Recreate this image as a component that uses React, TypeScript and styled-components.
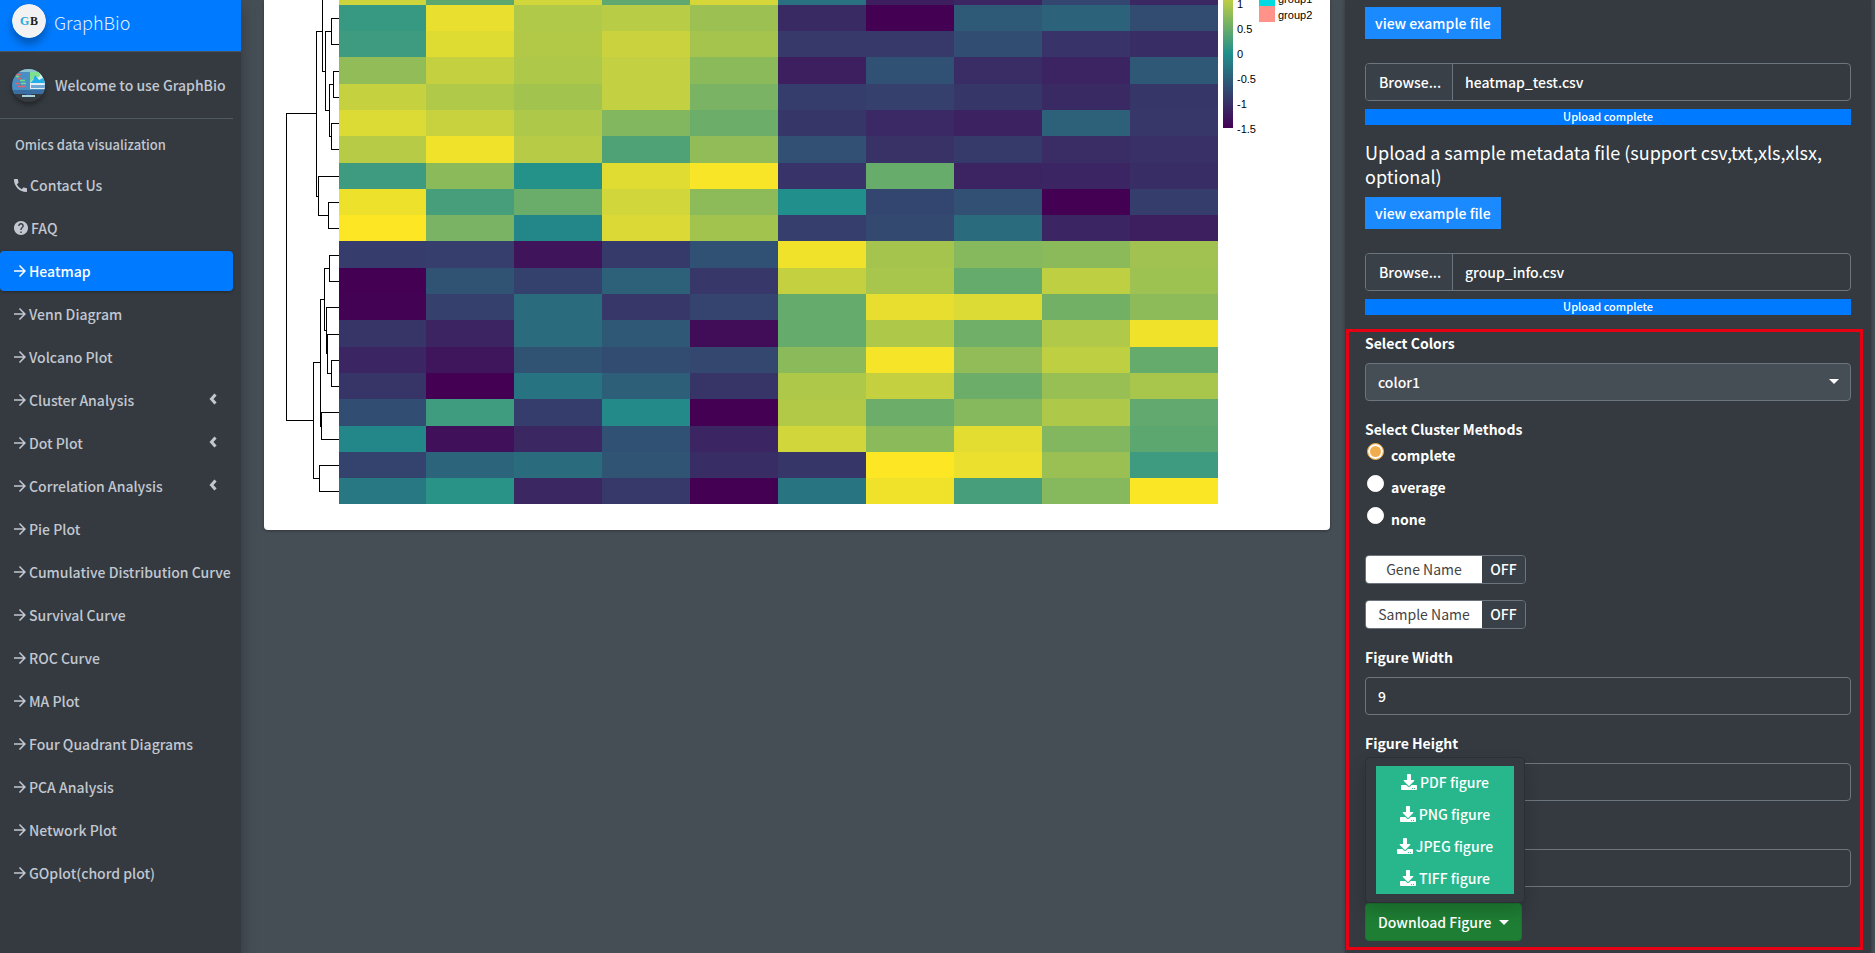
import React from "react";
import styled, { createGlobalStyle, css } from "styled-components";
import { FaDownload } from "react-icons/fa";

const GlobalStyle = createGlobalStyle`
  *, *::before, *::after { box-sizing: border-box; }
  body {
    margin: 0;
    background: #454d55;
    color: #fff;
    font-family: "Noto Sans CJK SC", "Source Sans Pro", "Open Sans", sans-serif;
    font-size: 14px;
    font-weight: 500;
    line-height: 24px;
  }
  input, select, button { font: inherit; color: inherit; }
`;

/* ---------- page frame ---------- */

const Page = styled.div`
  display: flex;
  min-height: 100vh;
`;

const Main = styled.main`
  flex: 1;
  min-width: 0;
  display: grid;
  grid-template-columns: minmax(0, 1fr) 526px;
  column-gap: 15px;
  padding: 0 4px 0 23px;
`;

/* ---------- sidebar ---------- */

const Sidebar = styled.aside`
  width: 241px;
  flex: none;
  background: #343a40;
  color: #c2c7d0;
  box-shadow: 0 8px 14px rgba(0, 0, 0, 0.25);
`;

const Brand = styled.a`
  display: flex;
  align-items: center;
  height: 52px;
  padding: 0 12px 9px;
  gap: 8px;
  background: #007bff;
  border-bottom: 1px solid #4b545c;
  color: rgba(255, 255, 255, 0.9);
  font-size: 18px;
  font-weight: 300;
  text-decoration: none;
`;

const BrandMark = styled.svg`
  width: 34px;
  height: 34px;
  border-radius: 50%;
  box-shadow: 0 6px 8px rgba(0, 0, 0, 0.3);
`;

const BrandName = styled.span`
  padding-top: 2px;
`;

const UserPanel = styled.div`
  display: flex;
  align-items: center;
  gap: 10px;
  margin-right: 8px;
  padding: 14px 0 14px 12px;
  height: 67px;
  border-bottom: 1px solid #4f5962;
  white-space: nowrap;
`;

const Avatar = styled.svg`
  width: 33px;
  height: 33px;
  border-radius: 50%;
  box-shadow: 0 3px 5px rgba(0, 0, 0, 0.35);
`;

const NavHeader = styled.h2`
  margin: 0;
  padding: 14px 15px 8px;
  font-size: 13px;
  line-height: 24px;
  font-weight: 500;
`;

const NavList = styled.ul`
  list-style: none;
  margin: 0;
  padding: 0;
  display: flex;
  flex-direction: column;
  gap: 3px;
`;

const NavLink = styled.a<{ $active?: boolean }>`
  display: flex;
  align-items: center;
  gap: 3px;
  height: 40px;
  margin-right: 8px;
  padding: 0 16px 0 14px;
  border-radius: 4px;
  color: #c2c7d0;
  text-decoration: none;
  white-space: nowrap;
  ${(p) =>
    p.$active &&
    css`
      background: #007bff;
      color: #fff;
      box-shadow: 0 1px 3px rgba(0, 0, 0, 0.3);
    `}
`;

const NavText = styled.span`
  flex: 1;
`;

const NavIcon = styled.svg`
  flex: none;
  fill: currentColor;
`;

const TreeArrow = styled.svg`
  flex: none;
  width: 8px;
  height: 12px;
  margin-bottom: 2px;
  fill: none;
  stroke: currentColor;
  stroke-width: 3;
`;

type IconKind = "call" | "help" | "arrow";

const iconShapes: Record<IconKind, { size: number; box: string; d: string }> = {
  arrow: {
    size: 12,
    box: "4 4 16 16",
    d: "M12 4l-1.41 1.41L16.17 11H4v2h12.17l-5.58 5.59L12 20l8-8z",
  },
  help: {
    size: 14,
    box: "2 2 20 20",
    d: "M12 2C6.48 2 2 6.48 2 12s4.48 10 10 10 10-4.48 10-10S17.52 2 12 2zm1 17h-2v-2h2v2zm2.07-7.75l-.9.92C13.45 12.9 13 13.5 13 15h-2v-.5c0-1.1.45-2.1 1.17-2.83l1.24-1.26c.37-.36.59-.86.59-1.41 0-1.1-.9-2-2-2s-2 .9-2 2H8c0-2.21 1.79-4 4-4s4 1.79 4 4c0 .88-.36 1.68-.93 2.25z",
  },
  call: {
    size: 13,
    box: "3 3 18 18",
    d: "M20.01 15.38c-1.23 0-2.42-.2-3.53-.56-.35-.12-.74-.03-1.01.24l-1.57 1.97c-2.83-1.35-5.48-3.9-6.89-6.83l1.95-1.66c.27-.28.35-.67.24-1.02-.37-1.11-.56-2.3-.56-3.53 0-.54-.45-.99-.99-.99H4.19C3.65 3 3 3.24 3 3.99 3 13.28 10.73 21 20.01 21c.71 0 .99-.63.99-1.18v-3.45c0-.54-.45-.99-.99-.99z",
  },
};

const navItems: { text: string; icon?: IconKind; active?: boolean; tree?: boolean }[] = [
  { text: "Contact Us", icon: "call" },
  { text: "FAQ", icon: "help" },
  { text: "Heatmap", active: true },
  { text: "Venn Diagram" },
  { text: "Volcano Plot" },
  { text: "Cluster Analysis", tree: true },
  { text: "Dot Plot", tree: true },
  { text: "Correlation Analysis", tree: true },
  { text: "Pie Plot" },
  { text: "Cumulative Distribution Curve" },
  { text: "Survival Curve" },
  { text: "ROC Curve" },
  { text: "MA Plot" },
  { text: "Four Quadrant Diagrams" },
  { text: "PCA Analysis" },
  { text: "Network Plot" },
  { text: "GOplot(chord plot)" },
];

function SideNav() {
  return (
    <Sidebar>
      <Brand href="#home">
        <BrandMark viewBox="0 0 34 34" aria-hidden="true">
          <circle cx="17" cy="17" r="17" fill="#f2f2f2" />
          <text x="8" y="21" fontFamily="Liberation Serif, serif" fontWeight="700" fontSize="12" fill="#27a9dd">
            G
          </text>
          <text x="18" y="21" fontFamily="Liberation Serif, serif" fontWeight="700" fontSize="12" fill="#1d1d1d">
            B
          </text>
        </BrandMark>
        <BrandName>GraphBio</BrandName>
      </Brand>
      <UserPanel>
        <Avatar viewBox="0 0 33 33" aria-hidden="true">
          <rect x="0" y="0" width="33" height="25" rx="3" fill="#4a8fc4" />
          <rect x="0" y="0" width="33" height="3" fill="#8ec3cf" />
          <rect x="18" y="3" width="15" height="11" fill="#d9f0ea" />
          <path d="M18 3h12l-3 5-5 1-4 4z" fill="#7fe08f" />
          <path d="M23 6l4 5 6-3v6H18l3-3z" fill="#22aee8" />
          <rect x="18" y="14" width="15" height="6" fill="#e3edf4" />
          <rect x="19" y="16" width="14" height="3" fill="#6fa6d4" />
          <path d="M3 5.500h6M5 9.500h4M3 14.500h4M6 17.500h8" stroke="#e4606a" strokeWidth="1.300" />
          <path d="M4 7.500h3M8 11.500h5M9 14.500h5" stroke="#6fdc8c" strokeWidth="1.300" />
          <path d="M0 21h33v2a2 2 0 0 1-2 2H2a2 2 0 0 1-2-2z" fill="#3a6ea3" />
          <path d="M14 25h5l1 2h-7z" fill="#2c5b8f" />
          <rect x="10" y="26" width="13" height="2" fill="#a8d3dc" />
        </Avatar>
        <span>Welcome to use GraphBio</span>
      </UserPanel>
      <nav>
        <NavHeader>Omics data visualization</NavHeader>
        <NavList>
          {navItems.map((item) => {
            const shape = iconShapes[item.icon ?? "arrow"];
            return (
              <li key={item.text}>
                <NavLink href="#tab" $active={item.active}>
                  <NavIcon width={shape.size} height={shape.size} viewBox={shape.box} aria-hidden="true">
                    <path d={shape.d} />
                  </NavIcon>
                  <NavText>{item.text}</NavText>
                  {item.tree && (
                    <TreeArrow viewBox="0 0 8 12" aria-hidden="true">
                      <path d="M6.500 1.500L2.500 6l4 4.500" />
                    </TreeArrow>
                  )}
                </NavLink>
              </li>
            );
          })}
        </NavList>
      </nav>
    </Sidebar>
  );
}

/* ---------- heatmap card ---------- */

const Card = styled.section`
  align-self: start;
  background: #fff;
  border-radius: 0 0 4px 4px;
  overflow: hidden;
  box-shadow: 0 1px 3px rgba(0, 0, 0, 0.3);
`;

const Chart = styled.svg`
  display: block;
  width: 100%;
  height: auto;
`;

const columnEdges = [75, 162, 250, 338, 426, 514, 602, 690, 778, 866, 954];
const rowEdges = [
  0, 5, 31, 57, 84, 110, 136, 163, 189, 215, 241, 268, 294, 320, 347, 373, 399, 426, 452, 478, 504,
];

/* z-scores as a percentage of the scale's limit */
const scores = [
  [78, 27, 80, 28, 82, -22, -80, -75, -52, -73],
  [10, 91, 65, 69, 56, -71, -100, -38, -32, -48],
  [13, 86, 66, 77, 60, -61, -61, -46, -65, -69],
  [51, 74, 64, 73, 48, -79, -44, -70, -76, -39],
  [75, 65, 59, 73, 40, -58, -56, -63, -71, -63],
  [85, 76, 64, 44, 34, -63, -72, -77, -33, -62],
  [68, 94, 68, 21, 51, -45, -66, -60, -70, -67],
  [13, 48, 2, 87, 98, -65, 32, -76, -74, -69],
  [93, 17, 33, 80, 49, -1, -52, -45, -100, -58],
  [100, 40, -7, 84, 59, -57, -50, -25, -74, -80],
  [-59, -57, -87, -60, -44, 94, 60, 46, 48, 58],
  [-100, -43, -55, -33, -62, 74, 62, 31, 72, 57],
  [-99, -56, -26, -62, -53, 31, 90, 85, 37, 49],
  [-64, -76, -26, -40, -92, 31, 64, 36, 65, 94],
  [-75, -85, -43, -48, -51, 48, 97, 51, 72, 31],
  [-64, -100, -20, -34, -64, 64, 74, 34, 54, 62],
  [-47, 14, -58, -5, -100, 66, 34, 46, 64, 29],
  [-6, -89, -73, -44, -75, 80, 48, 88, 44, 27],
  [-54, -31, -25, -42, -69, -63, 100, 92, 55, 13],
  [-17, 4, -73, -61, -100, -19, 94, 17, 46, 99],
];

const low = [68, 1, 84];
const mid = [33, 144, 140];
const high = [253, 231, 37];

function scoreColor(score: number) {
  const end = score < 0 ? low : high;
  const t = Math.abs(score) / 100;
  const [r, g, b] = mid.map((m, i) => Math.round(m + (end[i] - m) * t));
  return `rgb(${r},${g},${b})`;
}

/* each branch: x of the joint, its two arms' y, and where each arm ends */
const branches = [
  [22.5, 113.5, 420.5, 52.5, 49.5],
  [52.5, 31.5, 196.5, 58.5, 54.5],
  [58.5, -20, 71.5, 61.5, 61.5],
  [61.5, 31.5, 110.5, 67.5, 65.5],
  [67.5, 18.5, 44.5, 75, 75],
  [65.5, 84.5, 136.5, 69.5, 67.5],
  [69.5, 71.5, 97.5, 75, 75],
  [67.5, 123.5, 149.5, 75, 75],
  [54.5, 176.5, 215.5, 75, 64.5],
  [64.5, 202.5, 228.5, 75, 75],
  [65.5, 255.5, 281.5, 75, 75],
  [60.5, 268.5, 330.5, 65.5, 62.5],
  [62.5, 307.5, 353.5, 75, 63.5],
  [63.5, 334.5, 373.5, 75, 67.5],
  [67.5, 360.5, 386.5, 75, 75],
  [56.5, 299.5, 426.5, 60.5, 57.5],
  [57.5, 412.5, 439.5, 75, 75],
  [49.5, 362.5, 478.5, 56.5, 55.5],
  [55.5, 465.5, 491.5, 75, 75],
];

const scaleTicks = [
  ["1", 8],
  ["0.5", 33],
  ["0", 58],
  ["-0.5", 83],
  ["-1", 108],
  ["-1.5", 133],
] as const;

function HeatmapCard() {
  return (
    <Card>
      <Chart viewBox="0 0 1066 530" role="img" aria-label="Clustered heatmap">
        <defs>
          <linearGradient id="scale" gradientUnits="userSpaceOnUse" x1="0" y1="-22" x2="0" y2="128">
            <stop offset="0" stopColor="#fde725" />
            <stop offset="0.5" stopColor="#21908c" />
            <stop offset="1" stopColor="#440154" />
          </linearGradient>
        </defs>
        <g shapeRendering="crispEdges">
          {scores.map((row, r) =>
            row.map((score, c) => (
              <rect
                key={`${r}-${c}`}
                x={columnEdges[c]}
                y={rowEdges[r]}
                width={columnEdges[c + 1] - columnEdges[c]}
                height={rowEdges[r + 1] - rowEdges[r]}
                fill={scoreColor(score)}
              />
            ))
          )}
          {branches.map(([x, top, bottom, topEnd, bottomEnd], i) => (
            <path key={i} d={`M${topEnd} ${top}H${x}V${bottom}H${bottomEnd}`} fill="none" stroke="#000" />
          ))}
          <rect x="959" y="0" width="10" height="128" fill="url(#scale)" />
          <rect x="995" y="0" width="16" height="6" fill="#00dae0" />
          <rect x="995" y="6" width="16" height="16" fill="#ff9289" />
        </g>
        <g fontFamily="Liberation Sans, Arial, sans-serif" fontSize="11" fill="#000">
          {scaleTicks.map(([label, y]) => (
            <text key={label} x="973" y={y}>
              {label}
            </text>
          ))}
          <text x="1014" y="3">
            group1
          </text>
          <text x="1014" y="19">
            group2
          </text>
        </g>
      </Chart>
    </Card>
  );
}

/* ---------- options panel ---------- */

const Panel = styled.section`
  background: #343a40;
  box-shadow: 0 0 3px rgba(0, 0, 0, 0.3);
`;

const UploadArea = styled.div`
  padding: 7px 20px 14px;
`;

const ExampleButton = styled.button`
  display: block;
  height: 32px;
  padding: 0 10px;
  border: 0;
  background: #1b8aff;
  color: #fff;
`;

const FileRow = styled.div`
  display: flex;
  height: 38px;
  margin-top: 24px;
  border: 1px solid #6c757d;
  border-radius: 4px;
  overflow: hidden;
`;

const BrowseLabel = styled.label`
  position: relative;
  width: 87px;
  padding: 6px 0 0 13px;
  background: #3a4047;
  border-right: 1px solid #6c757d;
`;

const HiddenInput = styled.input`
  position: absolute;
  inset: 0;
  width: 100%;
  height: 100%;
  margin: 0;
  opacity: 0;
`;

const FileName = styled.input`
  flex: 1;
  min-width: 0;
  padding: 0 12px;
  border: 0;
  background: transparent;
`;

const ProgressBar = styled.div`
  height: 16px;
  margin-top: 8px;
  background: #007bff;
  font-size: 11px;
  line-height: 14px;
  text-align: center;
`;

const UploadTitle = styled.h3`
  margin: 15px 0 9px;
  font-size: 18px;
  line-height: 24px;
  font-weight: 400;
`;

const Options = styled.form`
  margin: 0 8px 0 1px;
  padding: 2px 12px 9px 19px;
  outline: 3px solid #e60012;
  outline-offset: -3px;
`;

const Field = styled.div`
  margin-bottom: 16px;
`;

const labelStyle = css`
  display: block;
  padding: 0;
  font-weight: 700;
  line-height: 24px;
`;

const FieldLabel = styled.label`
  ${labelStyle}
  margin-bottom: 8px;
`;

const controlStyle = css`
  display: block;
  width: 100%;
  height: 38px;
  padding: 0 12px;
  border: 1px solid #6c757d;
  border-radius: 4px;
`;

const TextInput = styled.input`
  ${controlStyle}
  background: #343a40;
`;

const SelectWrap = styled.div`
  position: relative;
`;

const Select = styled.select`
  ${controlStyle}
  appearance: none;
  background: #454d55;
`;

const Caret = styled.span`
  width: 0;
  height: 0;
  border: 5px solid transparent;
  border-top-color: #fff;
  border-bottom: 0;
`;

const SelectCaret = styled(Caret)`
  position: absolute;
  right: 12px;
  top: 16px;
  pointer-events: none;
`;

const RadioGroup = styled.fieldset`
  margin: 0 0 18px;
  padding: 0;
  border: 0;
`;

const Legend = styled.legend`
  ${labelStyle}
`;

const RadioLabel = styled.label`
  display: flex;
  align-items: flex-start;
  gap: 7px;
  height: 32px;
  padding: 2px 0 0 2px;
  font-weight: 700;
  line-height: 24px;
`;

const Radio = styled.input`
  appearance: none;
  width: 17px;
  height: 17px;
  margin: 0;
  border: 1px solid #fff;
  border-radius: 50%;
  background: #fff;
  &:checked {
    border-color: #f0ad4e;
    background: #f0ad4e;
    box-shadow: inset 0 0 0 2px #fff;
  }
`;

const Switch = styled.label`
  position: relative;
  display: flex;
  width: 161px;
  height: 29px;
  margin-bottom: 16px;
  border: 1px solid #6c757d;
  border-radius: 4px;
  overflow: hidden;
  line-height: 27px;
  text-align: center;
`;

const SwitchName = styled.span`
  width: 116px;
  background: #fff;
  color: #444;
  font-weight: 400;
`;

const SwitchState = styled.span`
  flex: 1;
  background: #3a4047;
`;

const Dropdown = styled.div`
  position: relative;
`;

const DropdownButton = styled.button`
  display: flex;
  align-items: center;
  justify-content: space-between;
  width: 157px;
  height: 38px;
  padding: 0 12px;
  border: 1px solid #1c7430;
  border-radius: 4px;
  background: #1e7e34;
  color: #fff;
`;

const Menu = styled.div`
  position: absolute;
  left: 0;
  bottom: 100%;
  width: 160px;
  padding: 8px 10px;
  border: 1px solid #2b3035;
  border-radius: 4px;
  background: #343a40;
  box-shadow: 0 8px 16px rgba(0, 0, 0, 0.18);
`;

const MenuItem = styled.a`
  display: flex;
  align-items: center;
  justify-content: center;
  gap: 3px;
  height: 32px;
  background: #28b78d;
  color: #fff;
  text-decoration: none;
`;

function FileUpload({ id, name }: { id: string; name: string }) {
  return (
    <>
      <ExampleButton type="button">view example file</ExampleButton>
      <FileRow>
        <BrowseLabel htmlFor={id}>
          Browse...
          <HiddenInput id={id} type="file" />
        </BrowseLabel>
        <FileName type="text" readOnly defaultValue={name} aria-label="Selected file" />
      </FileRow>
      <ProgressBar>Upload complete</ProgressBar>
    </>
  );
}

function OptionsPanel() {
  return (
    <Panel>
      <UploadArea>
        <FileUpload id="matrix-file" name="heatmap_test.csv" />
        <UploadTitle>Upload a sample metadata file (support csv,txt,xls,xlsx, optional)</UploadTitle>
        <FileUpload id="group-file" name="group_info.csv" />
      </UploadArea>
      <Options>
        <Field>
          <FieldLabel htmlFor="colors">Select Colors</FieldLabel>
          <SelectWrap>
            <Select id="colors" defaultValue="color1">
              <option>color1</option>
            </Select>
            <SelectCaret />
          </SelectWrap>
        </Field>
        <RadioGroup>
          <Legend>Select Cluster Methods</Legend>
          {["complete", "average", "none"].map((method) => (
            <RadioLabel key={method}>
              <Radio type="radio" name="method" value={method} defaultChecked={method === "complete"} />
              {method}
            </RadioLabel>
          ))}
        </RadioGroup>
        {["Gene Name", "Sample Name"].map((name) => (
          <Switch key={name}>
            <HiddenInput type="checkbox" />
            <SwitchName>{name}</SwitchName>
            <SwitchState>OFF</SwitchState>
          </Switch>
        ))}
        <Field>
          <FieldLabel htmlFor="width">Figure Width</FieldLabel>
          <TextInput id="width" type="text" defaultValue="9" />
        </Field>
        <Field>
          <FieldLabel htmlFor="height">Figure Height</FieldLabel>
          <TextInput id="height" type="text" />
        </Field>
        <Field>
          <FieldLabel htmlFor="resolution">&nbsp;</FieldLabel>
          <TextInput id="resolution" type="text" aria-label="Figure resolution" />
        </Field>
        <Dropdown>
          <Menu>
            {["PDF", "PNG", "JPEG", "TIFF"].map((format) => (
              <MenuItem key={format} href="#download">
                <FaDownload size={16} aria-hidden="true" />
                {format} figure
              </MenuItem>
            ))}
          </Menu>
          <DropdownButton type="button" aria-expanded="true">
            Download Figure
            <Caret />
          </DropdownButton>
        </Dropdown>
      </Options>
    </Panel>
  );
}

export default function App() {
  return (
    <Page>
      <GlobalStyle />
      <SideNav />
      <Main>
        <HeatmapCard />
        <OptionsPanel />
      </Main>
    </Page>
  );
}
